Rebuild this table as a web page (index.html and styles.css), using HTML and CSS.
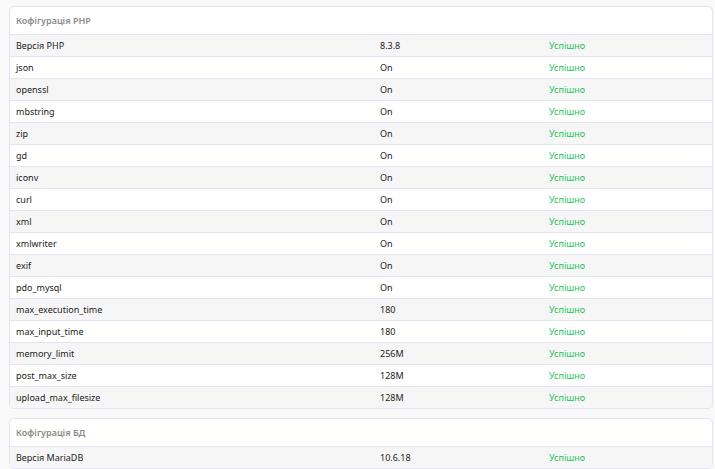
FILE: index.html
```html
<!DOCTYPE html>
<html lang="uk">
<head>
<meta charset="utf-8">
<link rel="stylesheet" href="styles.css">
</head>
<body>
<div class="page">
  <section class="card">
    <div class="card-head">Кофігурація PHP</div>
    <div class="row"><span>Версія PHP</span><span>8.3.8</span><span class="ok">Успішно</span></div>
    <div class="row"><span>json</span><span>On</span><span class="ok">Успішно</span></div>
    <div class="row"><span>openssl</span><span>On</span><span class="ok">Успішно</span></div>
    <div class="row"><span>mbstring</span><span>On</span><span class="ok">Успішно</span></div>
    <div class="row"><span>zip</span><span>On</span><span class="ok">Успішно</span></div>
    <div class="row"><span>gd</span><span>On</span><span class="ok">Успішно</span></div>
    <div class="row"><span>iconv</span><span>On</span><span class="ok">Успішно</span></div>
    <div class="row"><span>curl</span><span>On</span><span class="ok">Успішно</span></div>
    <div class="row"><span>xml</span><span>On</span><span class="ok">Успішно</span></div>
    <div class="row"><span>xmlwriter</span><span>On</span><span class="ok">Успішно</span></div>
    <div class="row"><span>exif</span><span>On</span><span class="ok">Успішно</span></div>
    <div class="row"><span>pdo_mysql</span><span>On</span><span class="ok">Успішно</span></div>
    <div class="row"><span>max_execution_time</span><span>180</span><span class="ok">Успішно</span></div>
    <div class="row"><span>max_input_time</span><span>180</span><span class="ok">Успішно</span></div>
    <div class="row"><span>memory_limit</span><span>256M</span><span class="ok">Успішно</span></div>
    <div class="row"><span>post_max_size</span><span>128M</span><span class="ok">Успішно</span></div>
    <div class="row"><span>upload_max_filesize</span><span>128M</span><span class="ok">Успішно</span></div>
  </section>
  <section class="card">
    <div class="card-head">Кофігурація БД</div>
    <div class="row"><span>Версія MariaDB</span><span>10.6.18</span><span class="ok">Успішно</span></div>
  </section>
</div>
</body>
</html>
```
FILE: styles.css
```css
html, body {
  margin: 0;
  padding: 0;
  background: #f9f9fa;
  font-family: "Noto Sans", "Open Sans", sans-serif;
  font-size: 9px;
  color: #222;
}
.page {
  display: flex;
  flex-direction: column;
  gap: 9px;
  padding: 6px 2px 0 9px;
}
.card {
  background: #fff;
  border: 1px solid #e6e3f4;
  border-radius: 5px;
  overflow: hidden;
}
.card-head {
  height: 27px;
  display: flex;
  align-items: center;
  padding-left: 6px;
  color: #8a8a8a;
  font-weight: 600;
}
.row {
  display: grid;
  grid-template-columns: 364px 169px 1fr;
  align-items: center;
  height: 21px;
  padding-left: 6px;
  border-top: 1px solid #e6e3f4;
}
.row:nth-of-type(even) {
  background: #f6f6f6;
}
.ok {
  color: #1fc35a;
}
```
